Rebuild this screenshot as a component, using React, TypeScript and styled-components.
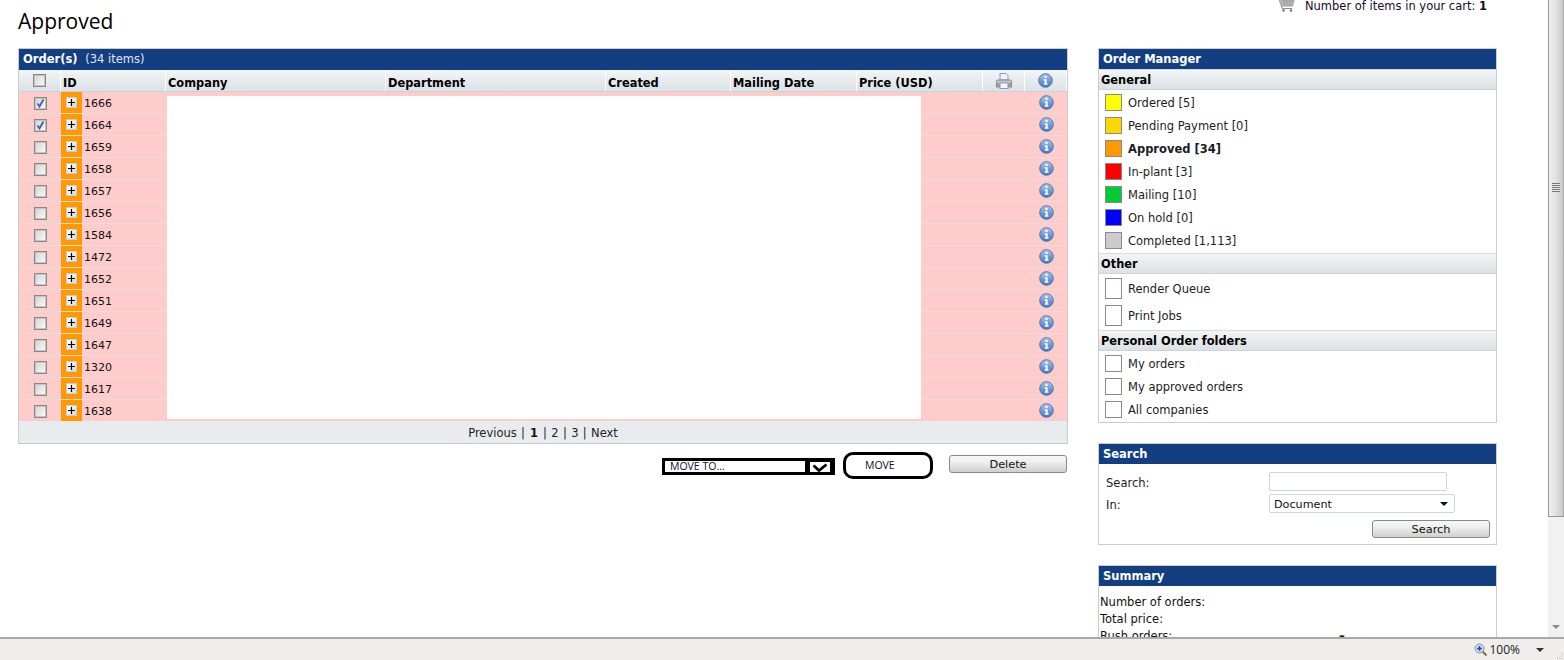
import React from "react";
import styled, { createGlobalStyle } from "styled-components";

const Global = createGlobalStyle`
  html, body { margin: 0; padding: 0; background: #fff; overflow: hidden; }
  body { font-family: "DejaVu Sans", Verdana, sans-serif; font-size: 11.5px; color: #111; }
  * { box-sizing: border-box; }
`;

const Shell = styled.div`
  width: 1564px;
  height: 660px;
  display: flex;
  flex-direction: column;
  overflow: hidden;
`;
const Viewport = styled.div`
  height: 637px;
  display: flex;
`;
const Page = styled.main`
  width: 1548px;
  height: 637px;
  overflow: hidden;
  padding-left: 18px;
`;
const TopBar = styled.header`
  height: 48px;
  display: flex;
  justify-content: space-between;
  align-items: flex-start;
  padding-right: 61px;
`;
const Title = styled.h1`
  margin: 8px 0 0;
  font: 400 21px/26px "Open Sans", "DejaVu Sans", sans-serif;
  color: #000;
`;
const Cart = styled.div`
  display: flex;
  align-items: flex-start;
  gap: 10px;
  line-height: 13px;
  color: #1a0a2a;
`;
const Columns = styled.div`
  display: flex;
  gap: 30px;
  align-items: flex-start;
`;
const OrdersColumn = styled.section`
  width: 1050px;
`;
const Frame = styled.div`
  position: relative;
  border: 1px solid #ccc;
`;
const BlueHead = styled.div<{ $height: number }>`
  height: ${(p) => p.$height}px;
  background: #133e82;
  color: #fff;
  font-weight: 700;
  line-height: ${(p) => p.$height}px;
  padding-left: 4px;
  white-space: pre;
`;
const HeadNote = styled.span`
  font-weight: 400;
  color: #dfe8f5;
`;
const gridCols = "42px 105px 220px 220px 125px 126px 126px 42px 42px";
const ColHead = styled.div`
  display: grid;
  grid-template-columns: ${gridCols};
  height: 22px;
  border-bottom: 1px solid #ccd2d6;
`;
const HeadCell = styled.div<{ $center?: boolean }>`
  display: flex;
  align-items: center;
  justify-content: ${(p) => (p.$center ? "center" : "flex-start")};
  padding-left: ${(p) => (p.$center ? 0 : 2)}px;
  padding-top: ${(p) => (p.$center ? 0 : 4)}px;
  font-weight: 700;
  font-size: 11.4px;
  color: #000;
  background: linear-gradient(#f3f5f6, #dbe1e5);
  border-right: 1px solid #fff;
`;
const Row = styled.div`
  display: grid;
  grid-template-columns: 42px 21px 84px 1fr 42px;
  height: 22px;
  background: #ffcccc;
  border-bottom: 1px solid #eadada;
`;
const Cell = styled.div`
  display: flex;
  align-items: center;
  justify-content: center;
`;
const CheckCell = styled(Cell)`
  padding: 2px 0 0 1px;
`;
const ToggleCell = styled(Cell)`
  background: #ff9900;
`;
const IdCell = styled.div`
  display: flex;
  align-items: center;
  padding: 1px 0 0 2px;
  font-size: 11px;
  color: #111;
`;
const Check = styled.span`
  width: 13px;
  height: 13px;
  display: flex;
  align-items: center;
  justify-content: center;
  border: 1px solid #888;
  background: linear-gradient(135deg, #d4d4d4, #fbfbfb);
  box-shadow: inset 0 0 0 1px #c4c4c4;
`;
const Plus = styled.span`
  width: 11px;
  height: 11px;
  display: flex;
  align-items: center;
  justify-content: center;
  background: linear-gradient(135deg, #fff, #d5dce6);
  border: 1px solid #c3ccd8;
`;
const Redaction = styled.div`
  position: absolute;
  left: 148px;
  top: 47px;
  width: 754px;
  height: 323px;
  background: #fff;
`;
const Pager = styled.div`
  position: relative;
  height: 22px;
  margin-top: -1px;
  padding-top: 2px;
  background: #e9ecef;
  display: flex;
  align-items: center;
  justify-content: center;
  gap: 5px;
  word-spacing: 0.7px;
  color: #222;
`;
const PagerStrong = styled.b`
  color: #111;
`;
const Actions = styled.div`
  display: flex;
  justify-content: flex-end;
  align-items: flex-start;
  margin-top: 8px;
  padding-right: 1px;
`;
const MoveSelect = styled.div`
  width: 173px;
  height: 17px;
  margin-top: 6px;
  border: 3px solid #000;
  display: flex;
  justify-content: space-between;
  font: 10.5px/10px "Open Sans", sans-serif;
  padding-left: 5px;
  color: #16082e;
  background: #fff;
`;
const MoveCaret = styled.span`
  width: 27px;
  border-left: 5px solid #000;
  border-right: 2px solid #000;
  border-top: 1px solid #000;
  display: flex;
  align-items: center;
  justify-content: center;
`;
const MoveButton = styled.div`
  width: 90px;
  height: 27px;
  margin-left: 8px;
  border: 3px solid #000;
  border-radius: 10px;
  font: 10.5px/20px "Open Sans", sans-serif;
  padding-left: 19px;
  color: #16082e;
`;
const GreyButton = styled.button<{ $width: number }>`
  display: block;
  width: ${(p) => p.$width}px;
  height: 18px;
  padding: 0;
  font: 11.3px/15px "DejaVu Sans", sans-serif;
  color: #111;
  border: 1px solid #8a8a8a;
  border-radius: 3px;
  background: linear-gradient(#f7f7f7, #f0f0f0 35%, #cfcfcf);
`;
const DeleteSlot = styled.div`
  margin-left: 16px;
  margin-top: 3px;
`;
const Sidebar = styled.aside`
  width: 399px;
  display: flex;
  flex-direction: column;
  gap: 20px;
`;
const Section = styled.div`
  height: 21px;
  border-top: 1px solid #d8dcdf;
  border-bottom: 1px solid #ccd2d6;
  background: linear-gradient(#f3f5f6, #dbe1e5);
  font-weight: 700;
  font-size: 11.4px;
  line-height: 20px;
  padding-left: 2px;
  color: #000;
`;
const Group = styled.div`
  padding: 1px 0 1px 6px;
  display: flex;
  flex-direction: column;
`;
const Item = styled.div<{ $tall?: boolean; $bold?: boolean }>`
  height: ${(p) => (p.$tall ? 27 : 23)}px;
  padding-top: 1px;
  display: flex;
  align-items: center;
  gap: 6px;
  font-weight: ${(p) => (p.$bold ? 700 : 400)};
  color: #1c1c28;
`;
const Swatch = styled.span<{ $color: string; $tall?: boolean }>`
  width: 17px;
  height: ${(p) => (p.$tall ? 21 : 17)}px;
  margin-top: -1px;
  background: ${(p) => p.$color};
  border: 1px solid #8a8a8a;
  flex: none;
`;
const SearchBody = styled.div`
  height: 80px;
  padding: 8px 6px 0 7px;
  display: grid;
  grid-template-columns: 163px 1fr;
  grid-auto-rows: 22px;
  align-items: start;
`;
const Label = styled.div`
  color: #222;
  line-height: 23px;
`;
const TextField = styled.div`
  width: 178px;
  height: 19px;
  border: 1px solid #cfd6dc;
  border-radius: 2px;
`;
const SelectField = styled.div`
  width: 186px;
  height: 19px;
  border: 1px solid #cfd6dc;
  border-radius: 2px;
  display: flex;
  align-items: center;
  justify-content: space-between;
  padding: 1px 6px 0 4px;
  color: #111;
  font-size: 11.2px;
`;
const Arrow = styled.span`
  width: 0;
  height: 0;
  border-left: 4px solid transparent;
  border-right: 4px solid transparent;
  border-top: 4px solid #111;
`;
const SearchAction = styled.div`
  grid-column: 1 / span 2;
  display: flex;
  justify-content: flex-end;
  margin-top: 4px;
`;
const SummaryBody = styled.div`
  padding: 8px 0 0 1px;
  display: flex;
  flex-direction: column;
`;
const SummaryLine = styled.div`
  height: 17px;
  line-height: 17px;
  display: flex;
  color: #111;
`;
const SummaryLabel = styled.span`
  width: 239px;
`;
const Scrollbar = styled.div`
  width: 16px;
  height: 637px;
  background: #f1f1f1;
  display: flex;
  flex-direction: column;
  align-items: center;
`;
const Thumb = styled.div`
  width: 16px;
  height: 517px;
  background: linear-gradient(90deg, #efefef, #e3e3e3 45%, #c9c9c9);
  border-left: 1px solid #959595;
  border-right: 1px solid #a8a8a8;
  border-bottom: 1px solid #959595;
  display: flex;
  align-items: flex-start;
  justify-content: center;
  padding-top: 183px;
`;
const Grip = styled.span`
  width: 8px;
  height: 9px;
  background: repeating-linear-gradient(#777 0 1px, #e8e8e8 1px 2px);
`;
const ScrollArrow = styled.span`
  margin-top: 108px;
  width: 0;
  height: 0;
  border-left: 4px solid transparent;
  border-right: 4px solid transparent;
  border-top: 4px solid #8a8a8a;
`;
const StatusBar = styled.footer`
  position: relative;
  height: 23px;
  border-top: 2px solid #a9a9a9;
  background: #f0eded;
  display: flex;
  align-items: center;
  justify-content: flex-end;
  padding-right: 20px;
  font: 12px "Open Sans", sans-serif;
  color: #222;
`;
const Zoom = styled.span`
  display: flex;
  align-items: center;
  gap: 1px;
  margin-right: 16px;
`;
const StatusArrow = styled(Arrow)`
  border-top-color: #333;
`;
const ResizeGrip = styled.svg`
  position: absolute;
  right: 0;
  bottom: 0;
`;

const Info = () => (
  <svg width="15" height="15" viewBox="0 0 15 15">
    <defs>
      <linearGradient id="ig" x1="0" y1="0" x2="0" y2="1">
        <stop offset="0" stopColor="#a9c4ea" />
        <stop offset="1" stopColor="#3f74c0" />
      </linearGradient>
    </defs>
    <circle cx="7.5" cy="7.5" r="6.8" fill="url(#ig)" stroke="#4d79b3" />
    <rect x="6.4" y="2.8" width="2.2" height="2.2" fill="#fff" />
    <path d="M5.6 6.2h3v4.4h1v1.2H5.600v-1.200h1V7.400h-1z" fill="#fff" />
  </svg>
);
const Printer = () => (
  <svg width="16" height="16" viewBox="0 0 16 16">
    <path d="M4 7V.5h6l2 2V7z" fill="#eef3fa" stroke="#7f9fc8" />
    <path d="M.5 12V8.500Q.5 7 2 7h12q1.500 0 1.500 1.500V12z" fill="#c2c5c8" stroke="#85898d" />
    <rect x=".5" y="11" width="15" height="3" fill="#9ea2a6" stroke="#85898d" />
    <rect x="4" y="10" width="8" height="5.500" fill="#f4f6f9" stroke="#7f9fc8" />
  </svg>
);
const CartIcon = () => (
  <svg width="16" height="12" viewBox="0 0 16 12">
    <path d="M0 0h15l-1.500 6H2.500z" fill="#c9c9c9" stroke="#8b8b8b" strokeWidth=".8" />
    <path d="M2 2h12M2.500 4h11M5 0v6M8 0v6M11 0v6" stroke="#8b8b8b" strokeWidth=".6" />
    <path d="M2.500 6l.6 2.500h10" fill="none" stroke="#8b8b8b" />
    <circle cx="4.500" cy="10.500" r="1.300" fill="#777" />
    <circle cx="12" cy="10.500" r="1.300" fill="#777" />
  </svg>
);
const Tick = () => (
  <svg width="11" height="11" viewBox="0 0 11 11">
    <path d="M2.500 5.500l2 3L8.500 1.500" fill="none" stroke="#4a5fa5" strokeWidth="1.900" />
  </svg>
);
const PlusMark = () => (
  <svg width="7" height="7" viewBox="0 0 7 7">
    <path d="M3.500 0v7M0 3.500h7" stroke="#000" strokeWidth="1.200" />
  </svg>
);
const Magnifier = () => (
  <svg width="14" height="14" viewBox="0 0 14 14">
    <path d="M8.500 8.500l4 4" stroke="#8a6a3a" strokeWidth="2" />
    <circle cx="5.500" cy="5.500" r="4.500" fill="#cfe0f5" stroke="#7f8fa6" />
    <path d="M5.500 3v5M3 5.500h5" stroke="#1c50b0" strokeWidth="1.600" />
  </svg>
);

const ids = [1666, 1664, 1659, 1658, 1657, 1656, 1584, 1472, 1652, 1651, 1649, 1647, 1320, 1617, 1638];
const columns = ["ID", "Company", "Department", "Created", "Mailing Date", "Price (USD)"];
const general: [string, string, boolean?][] = [
  ["#ffff00", "Ordered [5]"],
  ["#ffd700", "Pending Payment [0]"],
  ["#ff9900", "Approved [34]", true],
  ["#ff0000", "In-plant [3]"],
  ["#00cc33", "Mailing [10]"],
  ["#0000ff", "On hold [0]"],
  ["#cccccc", "Completed [1,113]"],
];

export default function App() {
  return (
    <Shell>
      <Global />
      <Viewport>
        <Page>
          <TopBar>
            <Title>Approved</Title>
            <Cart>
              <CartIcon />
              <span>
                Number of items in your cart: <b>1</b>
              </span>
            </Cart>
          </TopBar>
          <Columns>
            <OrdersColumn>
              <Frame>
                <BlueHead $height={21}>
                  Order(s) <HeadNote> (34 items)</HeadNote>
                </BlueHead>
                <ColHead>
                  <HeadCell $center>
                    <Check />
                  </HeadCell>
                  {columns.map((c) => (
                    <HeadCell key={c}>{c}</HeadCell>
                  ))}
                  <HeadCell $center>
                    <Printer />
                  </HeadCell>
                  <HeadCell $center>
                    <Info />
                  </HeadCell>
                </ColHead>
                {ids.map((id, i) => (
                  <Row key={id}>
                    <CheckCell>
                      <Check>{i < 2 && <Tick />}</Check>
                    </CheckCell>
                    <ToggleCell>
                      <Plus>
                        <PlusMark />
                      </Plus>
                    </ToggleCell>
                    <IdCell>{id}</IdCell>
                    <span />
                    <Cell>
                      <Info />
                    </Cell>
                  </Row>
                ))}
                <Redaction />
                <Pager>
                  <span>Previous |</span>
                  <PagerStrong>1</PagerStrong>
                  <span>| 2 | 3 | Next</span>
                </Pager>
              </Frame>
              <Actions>
                <MoveSelect>
                  MOVE TO...
                  <MoveCaret>
                    <svg width="16" height="9" viewBox="0 0 16 9">
                      <path d="M1.500 2.500l5.500 5L14.500 1.500" fill="none" stroke="#000" strokeWidth="2.800" />
                    </svg>
                  </MoveCaret>
                </MoveSelect>
                <MoveButton>MOVE</MoveButton>
                <DeleteSlot>
                  <GreyButton $width={118}>Delete</GreyButton>
                </DeleteSlot>
              </Actions>
            </OrdersColumn>
            <Sidebar>
              <Frame>
                <BlueHead $height={20}>Order Manager</BlueHead>
                <Section>General</Section>
                <Group>
                  {general.map(([color, label, bold]) => (
                    <Item key={label} $bold={bold}>
                      <Swatch $color={color} />
                      {label}
                    </Item>
                  ))}
                </Group>
                <Section>Other</Section>
                <Group>
                  <Item $tall>
                    <Swatch $color="#fff" $tall />
                    Render Queue
                  </Item>
                  <Item $tall>
                    <Swatch $color="#fff" $tall />
                    Print Jobs
                  </Item>
                </Group>
                <Section>Personal Order folders</Section>
                <Group>
                  <Item>
                    <Swatch $color="#fff" />
                    My orders
                  </Item>
                  <Item>
                    <Swatch $color="#fff" />
                    My approved orders
                  </Item>
                  <Item>
                    <Swatch $color="#fff" />
                    All companies
                  </Item>
                </Group>
              </Frame>
              <Frame>
                <BlueHead $height={20}>Search</BlueHead>
                <SearchBody>
                  <Label>Search:</Label>
                  <TextField />
                  <Label>In:</Label>
                  <SelectField>
                    Document
                    <Arrow />
                  </SelectField>
                  <SearchAction>
                    <GreyButton $width={118}>Search</GreyButton>
                  </SearchAction>
                </SearchBody>
              </Frame>
              <Frame>
                <BlueHead $height={20}>Summary</BlueHead>
                <SummaryBody>
                  <SummaryLine>Number of orders:</SummaryLine>
                  <SummaryLine>Total price:</SummaryLine>
                  <SummaryLine>
                    <SummaryLabel>Rush orders:</SummaryLabel>
                    <b>–</b>
                  </SummaryLine>
                </SummaryBody>
              </Frame>
            </Sidebar>
          </Columns>
        </Page>
        <Scrollbar>
          <Thumb>
            <Grip />
          </Thumb>
          <ScrollArrow />
        </Scrollbar>
      </Viewport>
      <StatusBar>
        <Zoom>
          <Magnifier />
          100%
        </Zoom>
        <StatusArrow />
        <ResizeGrip width="9" height="9" viewBox="0 0 9 9">
          <path d="M7 2h1v1H7zM4.500 4.500h1v1h-1zM7 4.500h1v1H7zM2 7h1v1H2zM4.500 7h1v1h-1zM7 7h1v1H7z" fill="#b5b0b0" />
        </ResizeGrip>
      </StatusBar>
    </Shell>
  );
}
